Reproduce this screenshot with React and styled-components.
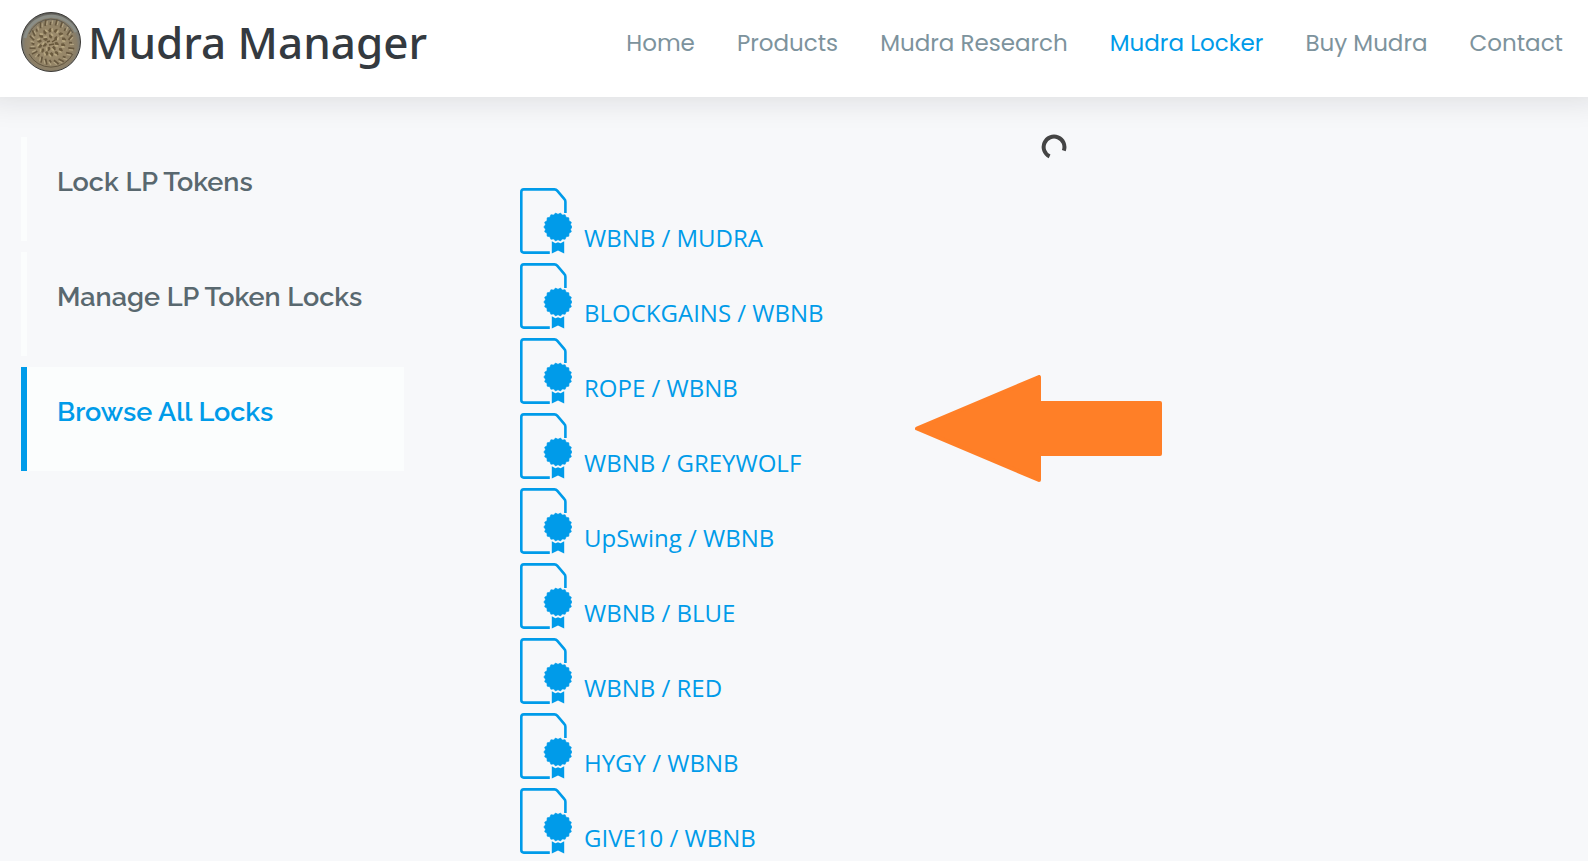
import React from "react";
import styled, { createGlobalStyle } from "styled-components";

const BLUE = "#009be9";

const GlobalStyle = createGlobalStyle`
  *, *::before, *::after { box-sizing: border-box; }
  body {
    margin: 0;
    background: #f7f8fa;
    font-family: "Open Sans", sans-serif;
    color: #59686f;
  }
  a { text-decoration: none; }
  ul { list-style: none; margin: 0; padding: 0; }
`;

const Header = styled.header`
  position: relative;
  display: flex;
  align-items: flex-start;
  justify-content: space-between;
  min-height: 97px;
  padding: 12px 25px 12px 21px;
  background: #fff;
  box-shadow: 0 -16px 32px 16px rgba(18, 24, 30, 0.14);
`;

const Brand = styled.a`
  display: flex;
  align-items: center;
  gap: 7px;
  height: 60px;
  color: #343a40;
  font: 500 44px/60px "Noto Sans", sans-serif;
  white-space: nowrap;
`;

const Nav = styled.nav`
  display: flex;
  gap: 42px;
  padding-top: 16px;
`;

const NavLink = styled.a`
  color: ${(p) => (p.$active ? BLUE : "#7d939d")};
  font: 400 23px/30px Poppins, Inter, sans-serif;
  white-space: nowrap;
`;

const Main = styled.main`
  display: grid;
  grid-template-columns: 383fr 1068fr;
  column-gap: 116px;
  padding-left: 21px;
`;

const Sidebar = styled.nav`
  display: flex;
  flex-direction: column;
  gap: 11px;
  padding-top: 40px;
`;

const SideLink = styled.a`
  min-height: 104px;
  padding: 30px;
  border-left: 6px solid ${(p) => (p.$active ? BLUE : "#fbfdfd")};
  background: ${(p) => (p.$active ? "#fbfdfd" : "transparent")};
  color: ${(p) => (p.$active ? BLUE : "#59686f")};
  font: 600 27px/30px Raleway, Inter, sans-serif;
  white-space: nowrap;
`;

const Content = styled.section`
  position: relative;
  display: flex;
  flex-direction: column;
  gap: 25px;
  padding-top: 37px;
`;

const Spinner = styled.svg`
  align-self: center;
  width: 26px;
  height: 26px;
`;

const LockLink = styled.a`
  display: flex;
  align-items: flex-end;
  gap: 12px;
  height: 75px;
  padding: 3px 0 6px;
  color: ${BLUE};
  font-size: 24px;
  line-height: 32px;
`;

const Arrow = styled.svg`
  position: absolute;
  top: 278px;
  left: 37%;
  width: 247px;
  height: 107px;
`;

const NAV = ["Home", "Products", "Mudra Research", "Mudra Locker", "Buy Mudra", "Contact"];
const SIDE = ["Lock LP Tokens", "Manage LP Token Locks", "Browse All Locks"];
const LOCKS = [
  "WBNB / MUDRA",
  "BLOCKGAINS / WBNB",
  "ROPE / WBNB",
  "WBNB / GREYWOLF",
  "UpSwing / WBNB",
  "WBNB / BLUE",
  "WBNB / RED",
  "HYGY / WBNB",
  "GIVE10 / WBNB",
];

const wobble = (i, k) => Math.sin(i * 12.9 + k * 7.3);

const ring = (count, radius, offset = 0) =>
  Array.from({ length: count }, (_, i) => {
    const a = ((i + offset) / count) * Math.PI * 2;
    const r = radius + wobble(i, radius);
    return { x: 30 + r * Math.cos(a), y: 31 + r * Math.sin(a), deg: (a * 180) / Math.PI + 35 * wobble(i, 3) };
  });

function Coin() {
  return (
    <svg width="60" height="60" viewBox="0 0 60 60" aria-hidden="true">
      <defs>
        <radialGradient id="coin" cx="50%" cy="55%" r="54%">
          <stop offset="0" stopColor="#a39272" />
          <stop offset="0.6" stopColor="#948466" />
          <stop offset="0.8" stopColor="#8a7e67" />
          <stop offset="0.9" stopColor="#7d7c74" />
          <stop offset="1" stopColor="#5c5c58" />
        </radialGradient>
      </defs>
      <circle cx="30" cy="30" r="29.5" fill="url(#coin)" stroke="#3b3a37" />
      <path d="M4 26A27 27 0 0 1 55 20" fill="none" stroke="#8b8e87" strokeWidth="3" />
      <path d="M8 22A24 24 0 0 1 52 21" fill="none" stroke="#5f5b50" strokeWidth="1" />
      <path d="M8 42A25 25 0 0 0 52 42" fill="none" stroke="#625640" strokeWidth="1" />
      {ring(24, 20).map((p, i) => (
        <g key={i} transform={`translate(${p.x} ${p.y}) rotate(${p.deg})`}>
          <rect x="-3" y="-1" width={i % 3 ? 6 : 3} height="1.7" fill="#66573e" />
          <rect x="-2" y="0.8" width="4" height="1.2" fill="#b3a483" />
        </g>
      ))}
      {[ring(14, 12.5, 0.4), ring(7, 6, 0.2)].flat().map((p, i) => (
        <g key={i} transform={`translate(${p.x} ${p.y}) rotate(${p.deg})`}>
          <path d="M-2.4 -1.2L0 -2L2.3 -0.4L1 1.6L-1.6 1.2Z" fill="#6a5a3e" />
          <path d="M-1.8 1.2L1.2 0.6L2.2 2.2L-1 2.8Z" fill="#b8a882" />
        </g>
      ))}
      <path d="M26 30L29 29M31 30L34 28M28 33L33 32" stroke="#655538" strokeWidth="1.5" />
    </svg>
  );
}

const SEAL = Array.from({ length: 36 }, (_, i) => {
  const a = (i / 36) * Math.PI * 2;
  const r = i % 2 ? 12.7 : 14.2;
  return `${(38 + r * Math.cos(a)).toFixed(2)},${(39 + r * Math.sin(a)).toFixed(2)}`;
}).join(" ");

function CertificateIcon() {
  return (
    <svg width="52" height="66" viewBox="0 0 52 66" aria-hidden="true">
      <path
        d="M45.4 25V13.8Q45.4 12.3 44.4 11.2L37.4 2.8Q36.2 1.4 34.4 1.4H3.8Q1.3 1.4 1.3 3.9V62.1Q1.3 64.6 3.8 64.6H29.8"
        fill="none"
        stroke="currentColor"
        strokeWidth="2.6"
      />
      <polygon points={SEAL} fill="currentColor" stroke="currentColor" strokeWidth="0.6" strokeLinejoin="round" />
      <path d="M31.8 53.2L35.4 55.2L38 54.2L40.6 55.2L44.2 53.2V65.6L38 62.4L31.8 65.6Z" fill="currentColor" />
    </svg>
  );
}

export default function App() {
  return (
    <>
      <GlobalStyle />
      <Header>
        <Brand href="#home">
          <Coin />
          Mudra Manager
        </Brand>
        <Nav aria-label="Main">
          {NAV.map((label) => (
            <NavLink key={label} href="#" $active={label === "Mudra Locker"}>
              {label}
            </NavLink>
          ))}
        </Nav>
      </Header>
      <Main>
        <Sidebar aria-label="Locker">
          {SIDE.map((label) => (
            <SideLink key={label} href="#" $active={label === "Browse All Locks"}>
              {label}
            </SideLink>
          ))}
        </Sidebar>
        <Content>
          <Spinner viewBox="0 0 26 26" role="img" aria-label="Loading">
            <path d="M22.8 16.6A10.4 10.4 0 1 0 8.6 22.4" fill="none" stroke="#444" strokeWidth="4" />
          </Spinner>
          <ul>
            {LOCKS.map((label) => (
              <li key={label}>
                <LockLink href="#">
                  <CertificateIcon />
                  {label}
                </LockLink>
              </li>
            ))}
          </ul>
          <Arrow viewBox="0 0 247 107" aria-hidden="true">
            <path
              d="M2 53.5L124 2V28H245V79H124V105Z"
              fill="#ff7f27"
              stroke="#ff7f27"
              strokeWidth="4"
              strokeLinejoin="round"
            />
          </Arrow>
        </Content>
      </Main>
    </>
  );
}
